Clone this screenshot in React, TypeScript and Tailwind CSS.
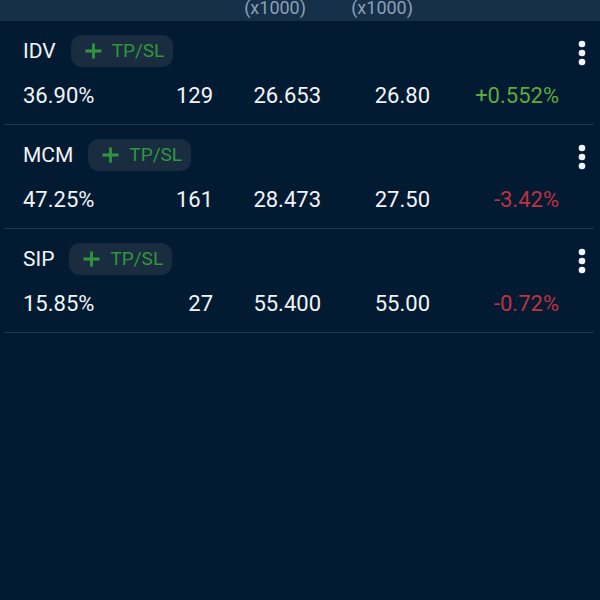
import React from "react";

type Row = {
  symbol: string;
  ratio: string;
  qty: string;
  cost: string;
  price: string;
  change: string;
  up: boolean;
};

const rows: Row[] = [
  { symbol: "IDV", ratio: "36.90%", qty: "129", cost: "26.653", price: "26.80", change: "+0.552%", up: true },
  { symbol: "MCM", ratio: "47.25%", qty: "161", cost: "28.473", price: "27.50", change: "-3.42%", up: false },
  { symbol: "SIP", ratio: "15.85%", qty: "27", cost: "55.400", price: "55.00", change: "-0.72%", up: false },
];

const cols = "grid grid-cols-[95px_95px_108px_109px_129px]";

function PlusIcon() {
  return (
    <svg width="17" height="16" viewBox="0 0 17 16" fill="none">
      <path d="M8.5 0.5V15.5M0.5 8H16.5" stroke="#30963c" strokeWidth="2.8" />
    </svg>
  );
}

function MoreDots() {
  return (
    <svg width="8" height="26" viewBox="0 0 8 26" fill="#f2f5f8">
      <circle cx="4" cy="4" r="3.3" />
      <circle cx="4" cy="13" r="3.3" />
      <circle cx="4" cy="22" r="3.3" />
    </svg>
  );
}

function PositionRow({ row }: { row: Row }) {
  return (
    <div className="ml-[4px] mr-[6px] border-b border-[#1c3650] pl-[19px] pr-[8px] pt-[14px] pb-[14px]">
      <div className="flex h-[32px] items-center">
        <div className="text-[21px] leading-[28px] text-[#f2f5f8]">{row.symbol}</div>
        <button className="ml-[15px] flex h-[32px] items-center gap-[10px] rounded-[11px] bg-[#1a2d40] pl-[14px] pr-[9px] text-[19px] leading-[24px] text-[#30963c]">
          <PlusIcon />
          <span>TP/SL</span>
        </button>
        <div className="flex-1" />
        <div className="mt-[4px]">
          <MoreDots />
        </div>
      </div>
      <div className={`${cols} mt-[15px] text-[22px] leading-[28px] text-[#f2f5f8]`}>
        <div>{row.ratio}</div>
        <div className="text-right">{row.qty}</div>
        <div className="text-right">{row.cost}</div>
        <div className="text-right">{row.price}</div>
        <div className={`text-right ${row.up ? "text-[#5faa3c]" : "text-[#be3241]"}`}>{row.change}</div>
      </div>
    </div>
  );
}

export default function App() {
  return (
    <div className="min-h-[600px] w-[600px] bg-[#031b32] font-['Roboto',sans-serif]">
      <div className="flex h-[21px] items-end overflow-hidden bg-[#16304a] pb-[3px] pl-[23px]">
        <div className={`${cols} w-full text-[18px] leading-[20px] text-[#8ca0b4]`}>
          <div />
          <div />
          <div className="pr-[15px] text-right">(x1000)</div>
          <div className="pr-[17px] text-right">(x1000)</div>
          <div />
        </div>
      </div>
      <div>
        {rows.map((r) => (
          <PositionRow key={r.symbol} row={r} />
        ))}
      </div>
    </div>
  );
}
